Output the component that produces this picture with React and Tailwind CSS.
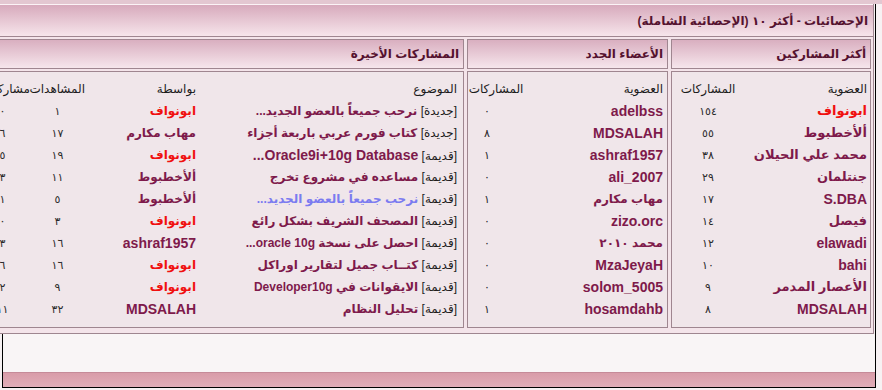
import React from 'react';

const topMembers = [
  { name: 'ابونواف', posts: '١٥٤', red: true },
  { name: 'ألأخطبوط', posts: '٥٥' },
  { name: 'محمد علي الحيلان', posts: '٣٨' },
  { name: 'جنتلمان', posts: '٢٩' },
  { name: 'S.DBA', posts: '١٧', latin: true },
  { name: 'فيصل', posts: '١٤' },
  { name: 'elawadi', posts: '١٢', latin: true },
  { name: 'bahi', posts: '١٠', latin: true },
  { name: 'الأعصار المدمر', posts: '٩' },
  { name: 'MDSALAH', posts: '٨', latin: true },
];

const newMembers = [
  { name: 'adelbss', posts: '٠', latin: true },
  { name: 'MDSALAH', posts: '٨', latin: true },
  { name: 'ashraf1957', posts: '١', latin: true },
  { name: 'ali_2007', posts: '٠', latin: true },
  { name: 'مهاب مكارم', posts: '١' },
  { name: 'zizo.orc', posts: '٠', latin: true },
  { name: 'محمد ٢٠١٠', posts: '٠' },
  { name: 'MzaJeyaH', posts: '٠', latin: true },
  { name: 'solom_5005', posts: '٠', latin: true },
  { name: 'hosamdahb', posts: '١', latin: true },
];

const latestPosts = [
  { tag: 'جديدة', title: 'نرحب جميعاً بالعضو الجديد...', by: 'ابونواف', byRed: true, views: '١', replies: '٠' },
  { tag: 'جديدة', title: 'كتاب فورم عربي باربعة أجزاء', by: 'مهاب مكارم', views: '١٧', replies: '٦' },
  { tag: 'قديمة', title: 'Oracle9i+10g Database...', latin: true, by: 'ابونواف', byRed: true, views: '١٩', replies: '٥' },
  { tag: 'قديمة', title: 'مساعده في مشروع تخرج', by: 'ألأخطبوط', views: '١١', replies: '٣' },
  { tag: 'قديمة', title: 'نرحب جميعاً بالعضو الجديد...', visited: true, by: 'ألأخطبوط', views: '٥', replies: '١' },
  { tag: 'قديمة', title: 'المصحف الشريف بشكل رائع', by: 'ابونواف', byRed: true, views: '٣', replies: '٠' },
  { tag: 'قديمة', title: 'احصل على نسخة oracle 10g...', by: 'ashraf1957', byLatin: true, views: '١٦', replies: '٣' },
  { tag: 'قديمة', title: 'كتــاب جميل لتقارير اوراكل', by: 'ابونواف', byRed: true, views: '١٦', replies: '٦' },
  { tag: 'قديمة', title: 'الايقوانات في Developer10g', by: 'ابونواف', byRed: true, views: '٩', replies: '٢' },
  { tag: 'قديمة', title: 'تحليل النظام', by: 'MDSALAH', byLatin: true, views: '٣٢', replies: '١١' },
];

// arabic names in the top posters box are a touch larger than elsewhere
const nameClass = (m, big) =>
  m.latin
    ? 'text-[#7e1a4b] text-[14px] font-bold'
    : `${m.red ? 'text-[#f01010]' : 'text-[#7e1a4b]'} ${big ? 'text-[13px]' : 'text-[12px]'} font-bold`;

const Section = ({ title, className, children }) => (
  <div className={`flex flex-col ${className}`}>
    <div className="h-[30px] border border-[#9f8690] bg-gradient-to-b from-[#d9afc0] to-[#f6e6ec] flex items-center pr-[4px] text-[12px] font-bold text-[#55122f]">
      {title}
    </div>
    <div className="mt-[2px] h-[257px] border border-[#9f8690] bg-[#f0e6ea] pt-[6px]">
      {children}
    </div>
  </div>
);

export default function App() {
  return (
    <div className="w-[882px] h-[390px] overflow-hidden bg-[#f7f1f3] font-['Liberation_Sans','DejaVu_Sans',sans-serif] text-[#1c1c1c]">
      <div className="h-[4px] bg-[#e3c7d1]" />
      <div dir="rtl" className="ml-[2px] w-[874px] h-[384px] border-x border-b border-black flex flex-col">
        <div className="mr-[1px] w-[1100px] shrink-0 bg-[#f4e4ea] border-x border-b border-[#9f8690]">
          <div className="h-[33px] border-t border-t-[#fbf3f6] border-b border-b-[#9f8690] bg-gradient-to-b from-[#d7aabc] to-[#f6e5eb] flex items-center pr-[5px] text-[12px] font-bold text-[#55122f]">
            الإحصائيات - أكثر ١٠ (الإحصائية الشاملة)
          </div>
          <div className="flex gap-[3px] pt-[2px] pb-[5px] pr-[2px]">
            <Section title="أكثر المشاركين" className="w-[200px] shrink-0">
              <div className="grid grid-cols-[1fr_72px] auto-rows-[22px] items-center pr-[3px]">
                <div className="text-[12px]">العضوية</div>
                <div className="text-[12px] text-center">المشاركات</div>
                {topMembers.map((m, i) => (
                  <React.Fragment key={i}>
                    <div className={nameClass(m, true)}>{m.name}</div>
                    <div className="text-[11px] text-center text-[#2a2a2a]">{m.posts}</div>
                  </React.Fragment>
                ))}
              </div>
            </Section>
            <Section title="الأعضاء الجدد" className="w-[201px] shrink-0">
              <div className="grid grid-cols-[1fr_56px] auto-rows-[22px] items-center pr-[4px]">
                <div className="text-[12px]">العضوية</div>
                <div className="text-[12px] text-center">المشاركات</div>
                {newMembers.map((m, i) => (
                  <React.Fragment key={i}>
                    <div className={nameClass(m, false)}>{m.name}</div>
                    <div className="text-[11px] text-left pl-[16px] text-[#2a2a2a]">{m.posts}</div>
                  </React.Fragment>
                ))}
              </div>
            </Section>
            <Section title="المشاركات الأخيرة" className="flex-1">
              <div className="w-[488px] grid grid-cols-[257px_115px_55px_55px] auto-rows-[22px] items-center pr-[6px]">
                <div className="text-[12px]">الموضوع</div>
                <div className="text-[12px] pr-[4px]">بواسطة</div>
                <div className="text-[12px] text-center">المشاهدات</div>
                <div className="text-[12px]">مشاركات</div>
                {latestPosts.map((p, i) => (
                  <React.Fragment key={i}>
                    <div className="whitespace-nowrap text-[12px]">
                      <span className="text-[#1c1c1c]">[{p.tag}]</span>{' '}
                      <span
                        className={`font-bold ${p.visited ? 'text-[#7b7bf0]' : 'text-[#7e1a4b]'} ${p.latin ? 'text-[14px]' : ''}`}
                      >
                        {p.title}
                      </span>
                    </div>
                    <div className={`pr-[4px] ${p.byRed ? 'text-[#f01010] text-[12px] font-bold' : p.byLatin ? 'text-[#7e1a4b] text-[14px] font-bold' : 'text-[#7e1a4b] text-[12px] font-bold'}`}>
                      {p.by}
                    </div>
                    <div className="text-[11px] text-center text-[#2a2a2a]">{p.views}</div>
                    <div className="text-[11px] text-center text-[#2a2a2a]">{p.replies}</div>
                  </React.Fragment>
                ))}
              </div>
            </Section>
          </div>
        </div>
        <div className="flex-1 bg-[#f9f5f6]" />
        <div className="h-[15px] border-t border-[#c68b99] bg-gradient-to-b from-[#d99ca9] to-[#e1adb8]" />
      </div>
    </div>
  );
}
